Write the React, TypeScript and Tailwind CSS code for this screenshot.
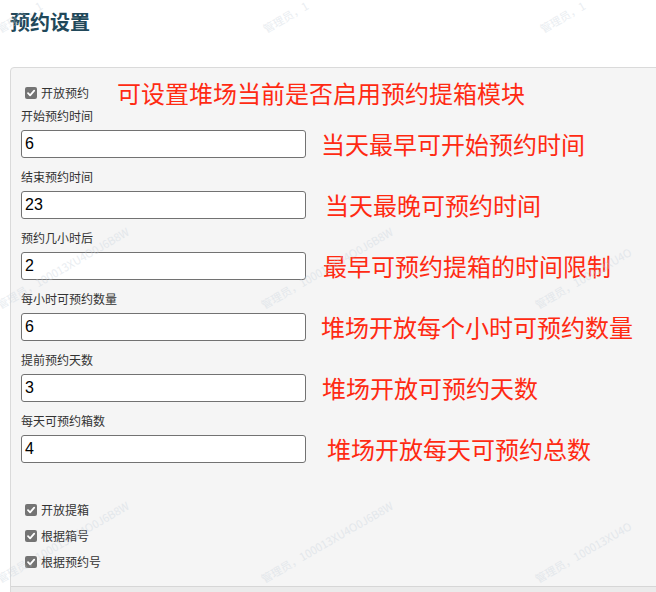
import React from "react";

const cjk = { fontFamily: '"Noto Sans CJK SC", "Noto Sans", sans-serif' };

function Check({ label }: { label: string }) {
  return (
    <div className="flex items-center h-5 pl-[4px]">
      <span className="w-[12px] h-[12px] rounded-[2px] bg-[#747474] flex items-center justify-center">
        <svg width="10" height="10" viewBox="0 0 10 10">
          <path d="M2 5.2 L4.1 7.3 L8.2 2.6" fill="none" stroke="#fff" strokeWidth="1.8" strokeLinecap="round" strokeLinejoin="round" />
        </svg>
      </span>
      <span className="ml-[4px] text-[12px] text-[#333]">{label}</span>
    </div>
  );
}

function Field({ label, value, note, ml }: { label: string; value: string; note: string; ml: string }) {
  return (
    <div className="mb-[10px]">
      <div className="h-[18px] leading-[18px] text-[12px] text-[#333] mb-[5px]">{label}</div>
      <div className="flex items-center">
        <div
          className="w-[285px] h-[28px] bg-white border border-[#727272] rounded-[3px] pl-[3px] flex items-center text-[16px] text-black"
          style={{ fontFamily: '"Liberation Sans", Arial, sans-serif' }}
        >
          {value}
        </div>
        <span className={`${ml} text-[24px] leading-[28px] text-[#ff2a12]`}>{note}</span>
      </div>
    </div>
  );
}

const full = "管理员，100013XU4O0J6B8W";
const half = "管理员，100013XU4O";
const marks = [
  { x: 2, y: 310, t: full },
  { x: 266, y: 310, t: full },
  { x: 540, y: 310, t: half },
  { x: 2, y: 584, t: full },
  { x: 266, y: 584, t: full },
  { x: 540, y: 584, t: half },
  { x: 2, y: 34, t: "管理员，1" },
  { x: 268, y: 34, t: "管理员，1" },
  { x: 545, y: 34, t: "管理员，1" },
];

export default function App() {
  return (
    <div className="relative w-[656px] h-[592px] overflow-hidden bg-white" style={cjk}>
      <div className="pl-[10px] pt-[8px] h-[36px] text-[20px] leading-[28px] font-bold text-[#21485a]">预约设置</div>
      <div className="mt-[31px] ml-[10px] mr-[-10px] border border-[#dadada] rounded-tl-[4px] bg-[#f5f5f5]">
        <div className="pl-[10px] pt-[15px] pb-[14px]">
          <div className="flex items-center mb-[4px]">
            <Check label="开放预约" />
            <span className="ml-[28px] text-[24px] leading-[20px] text-[#ff2a12]">可设置堆场当前是否启用预约提箱模块</span>
          </div>
          <Field label="开始预约时间" value="6" note="当天最早可开始预约时间" ml="ml-[15px]" />
          <Field label="结束预约时间" value="23" note="当天最晚可预约时间" ml="ml-[19px]" />
          <Field label="预约几小时后" value="2" note="最早可预约提箱的时间限制" ml="ml-[17px]" />
          <Field label="每小时可预约数量" value="6" note="堆场开放每个小时可预约数量" ml="ml-[15px]" />
          <Field label="提前预约天数" value="3" note="堆场开放可预约天数" ml="ml-[16px]" />
          <Field label="每天可预约箱数" value="4" note="堆场开放每天可预约总数" ml="ml-[21px]" />
          <div className="mt-[37px] flex flex-col gap-[6px]">
            <Check label="开放提箱" />
            <Check label="根据箱号" />
            <Check label="根据预约号" />
          </div>
        </div>
        <div className="h-[20px] border-t border-[#d6d6d6] bg-[#ebebeb]" />
      </div>
      {marks.map((m, i) => (
        <div
          key={i}
          className="absolute pointer-events-none whitespace-nowrap text-[11px] text-[#c9d3dd] opacity-40 origin-bottom-left"
          style={{ left: m.x, top: m.y - 14, transform: "rotate(-30deg)" }}
        >
          {m.t}
        </div>
      ))}
    </div>
  );
}
